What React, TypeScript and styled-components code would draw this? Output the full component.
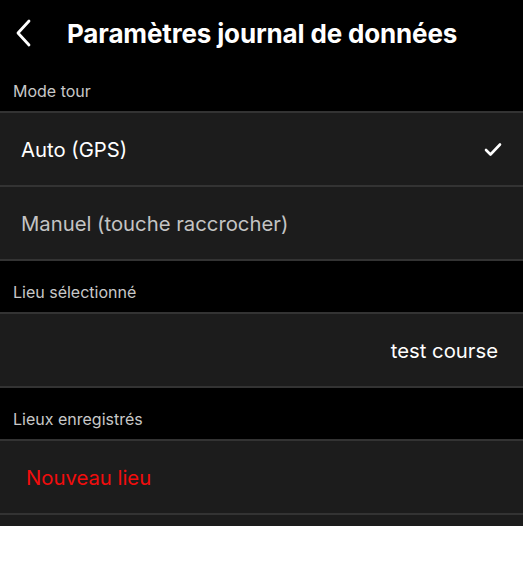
import React from "react";
import styled, { createGlobalStyle } from "styled-components";

const GlobalStyle = createGlobalStyle`
  body {
    margin: 0;
    background: #fff;
    font-family: Inter, "Noto Sans", "Liberation Sans", sans-serif;
    -webkit-font-smoothing: antialiased;
  }
`;

const Screen = styled.div`
  width: 523px;
  height: 526px;
  overflow: hidden;
  background: #000;
  color: #fff;
`;

const Header = styled.div`
  height: 60px;
  box-sizing: border-box;
  padding: 6px 0 0 15px;
  display: flex;
  align-items: center;
  gap: 34px;
`;

const BackButton = styled.button`
  width: 18px;
  height: 28px;
  padding: 0;
  border: none;
  background: none;
  display: flex;
  align-items: center;
  cursor: pointer;
`;

const Title = styled.h1`
  margin: 0;
  font-size: 26px;
  font-weight: 700;
  letter-spacing: -0.15px;
`;

const SectionLabel = styled.div`
  height: 51px;
  display: flex;
  align-items: flex-end;
  padding: 0 13px 10px;
  box-sizing: border-box;
  font-size: 16px;
  line-height: 19px;
  color: #c8c8c8;
`;

const List = styled.div`
  border-top: 2px solid #333;
`;

const Row = styled.div<{ $align?: "left" | "right" }>`
  height: 72px;
  display: flex;
  align-items: center;
  justify-content: ${(p) => (p.$align === "right" ? "flex-end" : "space-between")};
  padding: 0 21px;
  background: #1c1c1c;
  border-bottom: 2px solid #333;
`;

const RowText = styled.span<{ $tone?: "normal" | "muted" | "accent" }>`
  font-size: 20.3px;
  color: ${(p) =>
    p.$tone === "muted" ? "#c4c4c4" : p.$tone === "accent" ? "#f20d0d" : "#fff"};
  padding-left: ${(p) => (p.$tone === "accent" ? "5px" : "0")};
`;

const RightText = styled(RowText)`
  margin-right: 4px;
`;

const Chevron = () => (
  <svg width="18" height="28" viewBox="0 0 18 28">
    <path d="M14 2 L3 14 L14 26" fill="none" stroke="#fff" strokeWidth="2.8" strokeLinecap="round" strokeLinejoin="round" />
  </svg>
);

const Check = () => (
  <svg width="18" height="15" viewBox="0 0 18 15">
    <path d="M2 8 L6.5 12.5 L16 2.5" fill="none" stroke="#fff" strokeWidth="2.6" strokeLinecap="round" strokeLinejoin="round" />
  </svg>
);

export default function App() {
  return (
    <>
      <GlobalStyle />
      <Screen>
        <Header>
          <BackButton>
            <Chevron />
          </BackButton>
          <Title>Paramètres journal de données</Title>
        </Header>

        <SectionLabel>Mode tour</SectionLabel>
        <List>
          <Row>
            <RowText>Auto (GPS)</RowText>
            <Check />
          </Row>
          <Row>
            <RowText $tone="muted">Manuel (touche raccrocher)</RowText>
          </Row>
        </List>

        <SectionLabel>Lieu sélectionné</SectionLabel>
        <List>
          <Row $align="right">
            <RightText>test course</RightText>
          </Row>
        </List>

        <SectionLabel>Lieux enregistrés</SectionLabel>
        <List>
          <Row>
            <RowText $tone="accent">Nouveau lieu</RowText>
          </Row>
          <Row />
        </List>
      </Screen>
    </>
  );
}
